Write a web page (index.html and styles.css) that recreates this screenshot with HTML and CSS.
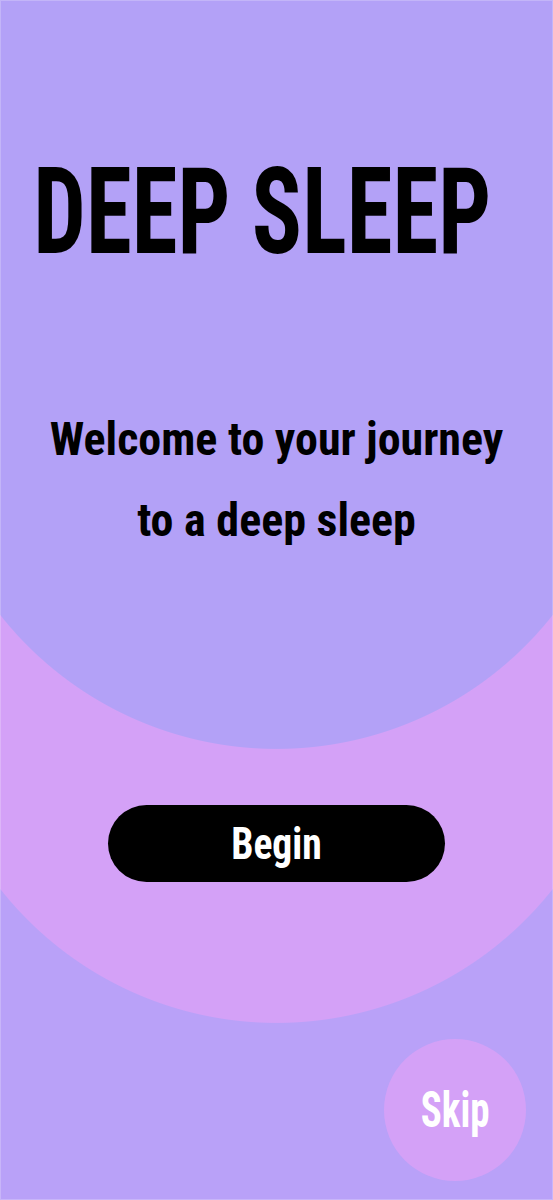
FILE: index.html
```html
<!DOCTYPE html>
<html lang="en">
<head>
<meta charset="utf-8">
<title>Deep Sleep</title>
<link rel="stylesheet" href="styles.css">
</head>
<body>
<main class="screen">
  <h1 class="title"><span class="squeeze-title">DEEP SLEEP</span></h1>
  <p class="subtitle">Welcome to your journey<br>to a deep sleep</p>
  <button class="begin" type="button"><span class="squeeze-begin">Begin</span></button>
  <button class="skip" type="button"><span class="squeeze-skip">Skip</span></button>
</main>
</body>
</html>
```

FILE: styles.css
```css
html, body {
  margin: 0;
  padding: 0;
}

body {
  font-family: "Liberation Sans Narrow", "Roboto Condensed", "DejaVu Sans Condensed", "Liberation Sans", sans-serif;
  font-weight: 700;
}

.screen {
  width: 553px;
  height: 1200px;
  box-sizing: border-box;
  display: flex;
  flex-direction: column;
  align-items: center;
  overflow: hidden;
  background-color: #b9a1f8;
  background-image:
    radial-gradient(circle 352px at 276.5px 397px, #b3a1f7 351.4px, rgba(179,161,247,0) 352.4px),
    linear-gradient(#b3a1f7, #b3a1f7),
    radial-gradient(circle 352px at 276.5px 671px, #d4a1f7 351.4px, rgba(212,161,247,0) 352.4px);
  background-size: 100% 100%, 100% 400px, 100% 100%;
  background-repeat: no-repeat;
  box-shadow: inset 0 0 0 1px rgba(255, 255, 255, 0.22);
}

.title {
  margin: 152px 28px 0 0;
  font-size: 121px;
  line-height: 120px;
  font-weight: 700;
  color: #000;
  white-space: nowrap;
}

.squeeze-title {
  display: inline-block;
  transform: scaleX(0.77);
}

.subtitle {
  margin: 127px 0 0;
  font-size: 46px;
  line-height: 81px;
  text-align: center;
  color: #000;
}

.begin {
  margin-top: 244px;
  width: 337px;
  height: 77px;
  border: 0;
  border-radius: 39px;
  background: #000;
  color: #fff;
  font-family: inherit;
  font-weight: 700;
  font-size: 45px;
  line-height: 77px;
  padding: 0;
}

.squeeze-begin {
  display: inline-block;
  transform: scaleX(0.88);
}

.skip {
  margin: auto 27px 19px auto;
  width: 142px;
  height: 142px;
  border: 0;
  border-radius: 50%;
  background: #d4a1f7;
  color: #fff;
  font-family: inherit;
  font-weight: 700;
  font-size: 50px;
  line-height: 142px;
  padding: 0;
}

.squeeze-skip {
  display: inline-block;
  transform: scaleX(0.78);
}
```
